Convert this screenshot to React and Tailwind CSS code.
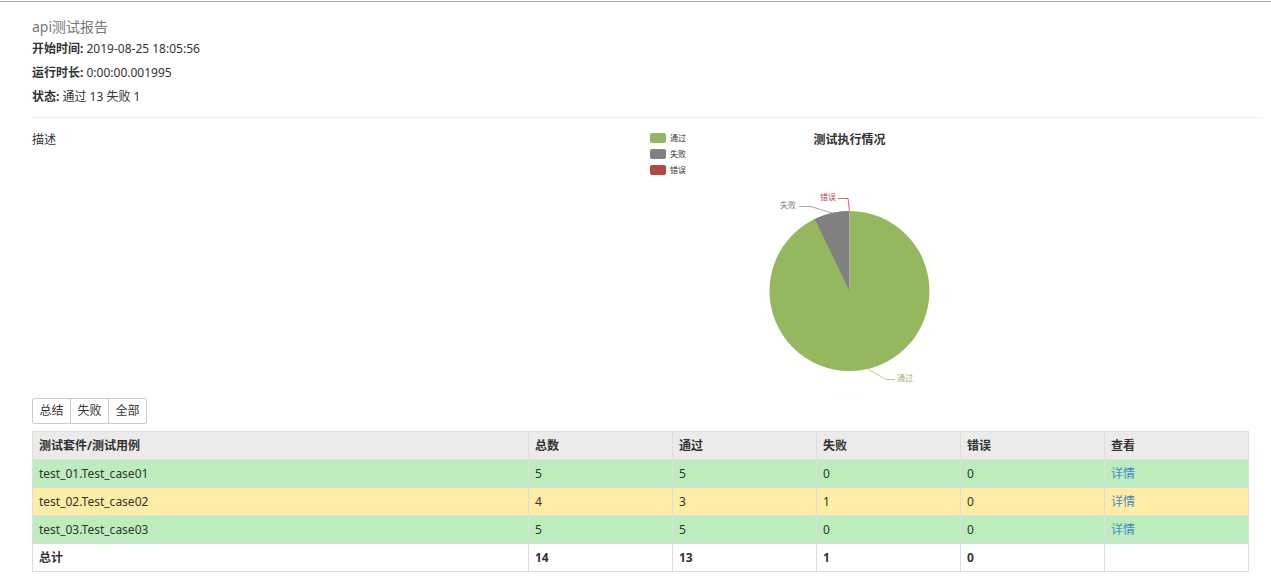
const info = [
    { label: "开始时间:", value: "2019-08-25 18:05:56" },
    { label: "运行时长:", value: "0:00:00.001995" },
    { label: "状态:", value: "通过 13 失败 1" },
];

const legend = [
    { name: "通过", color: "bg-[#95b75d]" },
    { name: "失败", color: "bg-[#808080]" },
    { name: "错误", color: "bg-[#b64645]" },
];

const filters = ["总结", "失败", "全部"];

const suites = [
    { name: "test_01.Test_case01", total: 5, pass: 5, fail: 0, error: 0 },
    { name: "test_02.Test_case02", total: 4, pass: 3, fail: 1, error: 0 },
    { name: "test_03.Test_case03", total: 5, pass: 5, fail: 0, error: 0 },
];

const cell = "h-7 border border-[#ddd] px-1.5 text-left";

function PieChart() {
    return (
        <svg
            viewBox="0 0 409 214"
            width="409"
            height="214"
            role="img"
            aria-label="测试执行情况"
            fill="none"
            fontSize="8"
            className="mt-px"
        >
            <circle cx="204.5" cy="112" r="80" fill="#95b75d" />
            <path d="M204.5 112 L169.8 39.9 A80 80 0 0 1 204.5 32 Z" fill="#808080" />
            <path d="M204.5 32 V110" stroke="#b9b5a5" strokeWidth="1" />

            <path d="M154 27.5 H166 L187 34" stroke="#808080" strokeWidth="0.7" />
            <path d="M193 19.5 H203 L204.5 32" stroke="#b64645" strokeWidth="0.8" />
            <path d="M223 190 L241 200.5 H250" stroke="#95b75d" strokeWidth="0.7" />

            <text x="135" y="29" fill="#808080">失败</text>
            <text x="175" y="21" fill="#b64645">错误</text>
            <text x="252" y="202" fill="#95b75d">通过</text>
        </svg>
    );
}

function SuiteRow({ suite }) {
    return (
        <tr className={suite.fail > 0 ? "bg-[#ffeda5]" : "bg-[#bdedbc]"}>
            <td className={cell}>{suite.name}</td>
            <td className={cell}>{suite.total}</td>
            <td className={cell}>{suite.pass}</td>
            <td className={cell}>{suite.fail}</td>
            <td className={cell}>{suite.error}</td>
            <td className={cell}>
                <a href="#detail" className="text-[#428bca] hover:underline">
                    详情
                </a>
            </td>
        </tr>
    );
}

export default function App() {
    return (
        <div className="bg-white pt-px font-['Noto_Sans','Noto_Sans_CJK_SC',sans-serif] text-xs text-[#333]">
            <main className="border-t border-[#aaa] pt-[15px] pr-[9px] pb-3 pl-8">
                <h1 className="text-sm leading-5 text-[#777]">api测试报告</h1>
                {info.map((item) => (
                    <p key={item.label} className="leading-6">
                        <strong>{item.label}</strong> {item.value}
                    </p>
                ))}
                <hr className="mt-2 border-[#eee]" />

                <section className="mt-3 mr-1 grid grid-cols-2">
                    <p className="leading-5">描述</p>
                    <div className="w-[409px]">
                        <div className="grid grid-cols-[1fr_auto_1fr]">
                            <ul className="pl-[5px]">
                                {legend.map((item) => (
                                    <li key={item.name} className="flex h-4 items-center gap-1 text-[8px] leading-4">
                                        <span className={`h-2.5 w-4 rounded-xs ${item.color}`} />
                                        {item.name}
                                    </li>
                                ))}
                            </ul>
                            <h2 className="text-xs leading-5 font-bold">测试执行情况</h2>
                        </div>
                        <PieChart />
                    </div>
                </section>

                <div className="mt-[5px] mr-[13px]">
                    <div className="flex">
                        {filters.map((name) => (
                            <button
                                key={name}
                                type="button"
                                className="-ml-px h-[26px] w-[39px] border border-[#ccc] bg-white first:ml-0 first:rounded-l-xs last:rounded-r-xs hover:bg-gray-100"
                            >
                                {name}
                            </button>
                        ))}
                    </div>

                    <table className="mt-[7px] w-full table-fixed border-collapse">
                        <colgroup>
                            <col />
                            <col className="w-[144px]" />
                            <col className="w-[144px]" />
                            <col className="w-[144px]" />
                            <col className="w-[144px]" />
                            <col className="w-[144px]" />
                        </colgroup>
                        <thead className="bg-[#ebebeb]">
                            <tr>
                                <th className={cell}>测试套件/测试用例</th>
                                <th className={cell}>总数</th>
                                <th className={cell}>通过</th>
                                <th className={cell}>失败</th>
                                <th className={cell}>错误</th>
                                <th className={cell}>查看</th>
                            </tr>
                        </thead>
                        <tbody>
                            {suites.map((suite) => (
                                <SuiteRow key={suite.name} suite={suite} />
                            ))}
                        </tbody>
                        <tfoot className="font-bold">
                            <tr>
                                <td className={cell}>总计</td>
                                <td className={cell}>14</td>
                                <td className={cell}>13</td>
                                <td className={cell}>1</td>
                                <td className={cell}>0</td>
                                <td className={cell}></td>
                            </tr>
                        </tfoot>
                    </table>
                </div>
            </main>
        </div>
    );
}
